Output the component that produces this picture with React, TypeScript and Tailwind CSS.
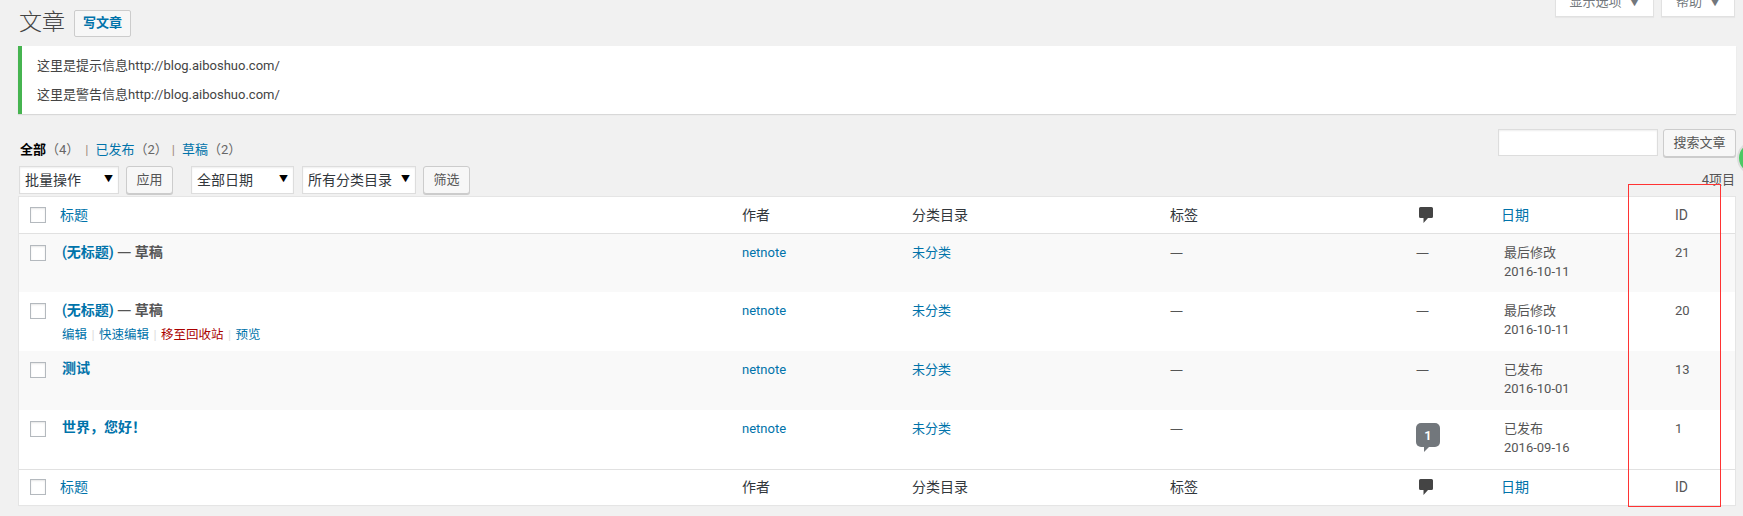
const blue = "text-[#0073aa]";

function Checkbox() {
  return (
    <span className="block w-4 h-4 bg-white border border-[#b4b9be] shadow-[inset_0_1px_2px_rgba(0,0,0,0.1)]"></span>
  );
}

function CommentIcon() {
  return (
    <svg width="14" height="16" viewBox="0 0 14 16" className="block">
      <path d="M1.5 0h11A1.5 1.5 0 0 1 14 1.5v8a1.5 1.5 0 0 1-1.5 1.500H9l-4.500 5v-5h-3A1.500 1.500 0 0 1 0 9.500v-8A1.500 1.500 0 0 1 1.500 0z" fill="#444" />
    </svg>
  );
}

function Dash() {
  return <span className="font-['Open_Sans']">—</span>;
}

function Select({ label, width }: { label: string; width: string }) {
  return (
    <div className={`${width} h-[28px] bg-white border border-[#ddd] flex items-center justify-between pl-[5px] pr-[5px] text-[14px] text-[#32373c] shadow-[inset_0_1px_2px_rgba(0,0,0,0.07)]`}>
      <span>{label}</span>
      <span className="text-[9px] text-black">▼</span>
    </div>
  );
}

function Button({ label, width }: { label: string; width: string }) {
  return (
    <div className={`${width} h-[28px] bg-[#f7f7f7] border border-[#ccc] rounded-[3px] flex items-center justify-center text-[13px] text-[#555] shadow-[0_1px_0_#ccc]`}>
      {label}
    </div>
  );
}

function HeadRow({ border }: { border: string }) {
  return (
    <tr className={`h-[36px] ${border} border-[#e1e1e1] text-[14px] text-[#32373c]`}>
      <td className="pl-[11px] align-middle"><Checkbox /></td>
      <td className={`pl-[8px] pt-[1px] ${blue}`}>标题</td>
      <td className="pl-[10px] pt-[1px]">作者</td>
      <td className="pl-[10px] pt-[1px]">分类目录</td>
      <td className="pl-[10px] pt-[1px]">标签</td>
      <td className="pl-[19px]"><CommentIcon /></td>
      <td className={`pl-[10px] pt-[1px] ${blue}`}>日期</td>
      <td className="pl-[10px] pt-[1px] text-[#555]">ID</td>
    </tr>
  );
}

const posts = [
  { title: "(无标题)", draft: true, status: "最后修改", date: "2016-10-11", id: "21", comments: 0, alt: true },
  { title: "(无标题)", draft: true, status: "最后修改", date: "2016-10-11", id: "20", comments: 0, alt: false, actions: true },
  { title: "测试", draft: false, status: "已发布", date: "2016-10-01", id: "13", comments: 0, alt: true },
  { title: "世界，您好！", draft: false, status: "已发布", date: "2016-09-16", id: "1", comments: 1, alt: false },
];

function Sep() {
  return <span className="w-[12px] text-center text-[#ddd]">|</span>;
}

function PostRow({ post }: { post: (typeof posts)[number] }) {
  return (
    <tr className={`h-[59px] align-top text-[13px] text-[#555] ${post.alt ? "bg-[#f9f9f9]" : "bg-white"}`}>
      <td className="pl-[11px] pt-[11px]"><Checkbox /></td>
      <td className="pl-[10px] pt-[8px]">
        <div className="text-[14px] leading-[19px] font-semibold">
          <span className={blue}>{post.title}</span>
          {post.draft && <span className="text-[#555]"> <span className="font-normal"><Dash /></span> 草稿</span>}
        </div>
        {post.actions && (
          <div className="text-[12.5px] leading-[18px] mt-[6px] flex">
            <span className={blue}>编辑</span>
            <Sep />
            <span className={blue}>快速编辑</span>
            <Sep />
            <span className="text-[#a00]">移至回收站</span>
            <Sep />
            <span className={blue}>预览</span>
          </div>
        )}
      </td>
      <td className={`pl-[10px] pt-[9px] leading-[19px] ${blue}`}>netnote</td>
      <td className={`pl-[10px] pt-[9px] leading-[19px] ${blue}`}>未分类</td>
      <td className="pl-[10px] pt-[9px] leading-[19px]"><Dash /></td>
      <td className="pl-[16px] pt-[9px] leading-[19px]">
        {post.comments > 0 ? (
          <div className="relative mt-[4px] w-[24px] h-[24px] rounded-[5px] bg-[#72777c] text-white text-[13px] font-semibold flex items-center justify-center">
            {post.comments}
            <span className="absolute left-[8px] top-[24px] border-t-[5px] border-r-[5px] border-t-[#72777c] border-r-transparent"></span>
          </div>
        ) : (
          <Dash />
        )}
      </td>
      <td className="pl-[13px] pt-[9px] leading-[19px]">
        <div>{post.status}</div>
        <div>{post.date}</div>
      </td>
      <td className="pl-[10px] pt-[9px] leading-[19px] text-[#555]">{post.id}</td>
    </tr>
  );
}

export default function App() {
  return (
    <div
      className="relative w-full h-[516px] overflow-hidden bg-[#f1f1f1] text-[13px] text-[#444]"
      style={{ fontFamily: 'Roboto, "Noto Sans CJK SC", sans-serif' }}
    >
      <div className="flex justify-end gap-[7px] pr-[8px] h-[17px] items-end">
        <div className="w-[99px] h-[30px] shrink-0 bg-white border border-[#e1e1e1] shadow-[0_1px_1px_rgba(0,0,0,0.04)] flex items-center justify-center gap-[8px] text-[13px] text-[#72777c]">
          显示选项 <span className="text-[10px]">▼</span>
        </div>
        <div className="w-[74px] h-[30px] shrink-0 bg-white border border-[#e1e1e1] shadow-[0_1px_1px_rgba(0,0,0,0.04)] flex items-center justify-center gap-[8px] text-[13px] text-[#72777c]">
          帮助 <span className="text-[10px]">▼</span>
        </div>
      </div>

      <div className="pl-[19px] pr-[7px]">
        <div className="flex items-center h-[26px] -mt-[7px]">
          <h1 className="text-[23px] font-light text-[#444] leading-[26px]">文章</h1>
          <div className={`ml-[9px] w-[57px] h-[27px] bg-[#f7f7f7] border border-[#ccc] rounded-[2px] flex items-center justify-center text-[13px] font-semibold ${blue}`}>
            写文章
          </div>
        </div>

        <div className="-ml-[1px] mt-[10px] h-[68px] bg-white border-l-4 border-[#46b450] shadow-[0_1px_1px_rgba(0,0,0,0.1)] pl-[15px] pt-[10px] text-[13px] text-[#444] leading-[19px]">
          <p>这里是提示信息http://blog.aiboshuo.com/</p>
          <p className="mt-[10px]">这里是警告信息http://blog.aiboshuo.com/</p>
        </div>

        <div className="flex justify-between mt-[15px] h-[37px]">
          <div className="pt-[11px] pl-[1px] text-[13px] leading-[19px] text-[#666] flex">
            <span className="font-bold text-black">全部</span>
            <span>（4）</span>
            <span className="text-[#a08a80] pl-[6px] pr-[7px]">|</span>
            <span className={blue}>已发布</span>
            <span>（2）</span>
            <span className="text-[#a08a80] pl-[4px] pr-[7px]">|</span>
            <span className={blue}>草稿</span>
            <span>（2）</span>
          </div>
          <div className="flex gap-[5px]">
            <div className="w-[160px] h-[27px] bg-white border border-[#ddd] shadow-[inset_0_1px_2px_rgba(0,0,0,0.07)]"></div>
            <Button label="搜索文章" width="w-[73px]" />
          </div>
        </div>

        <div className="flex items-center h-[28px]">
          <Select label="批量操作" width="w-[100px]" />
          <div className="ml-[7px]"><Button label="应用" width="w-[47px]" /></div>
          <div className="ml-[18px]"><Select label="全部日期" width="w-[103px]" /></div>
          <div className="ml-[8px]"><Select label="所有分类目录" width="w-[114px]" /></div>
          <div className="ml-[7px]"><Button label="筛选" width="w-[47px]" /></div>
          <div className="ml-auto pr-[1px] text-[13px] text-[#555]">4项目</div>
        </div>

        <table className="mt-[3px] w-[1716px] table-fixed border-collapse bg-white outline outline-1 outline-[#e5e5e5] shadow-[0_1px_1px_rgba(0,0,0,0.04)]">
          <colgroup>
            <col className="w-[33px]" />
            <col className="w-[680px]" />
            <col className="w-[170px]" />
            <col className="w-[258px]" />
            <col className="w-[240px]" />
            <col className="w-[91px]" />
            <col className="w-[174px]" />
            <col className="w-[70px]" />
          </colgroup>
          <tbody>
            <HeadRow border="border-b" />
            {posts.map((post) => (
              <PostRow key={post.id} post={post} />
            ))}
            <HeadRow border="border-t" />
          </tbody>
        </table>
      </div>

      {/* red annotation box drawn over the screenshot */}
      <div className="absolute left-[1628px] top-[184px] w-[93px] h-[323px] border border-[#f33]"></div>
      <div className="absolute left-[1737px] top-[141px] w-[34px] h-[34px] rounded-full bg-[#4bc964] border-2 border-[#ddd]"></div>
    </div>
  );
}
